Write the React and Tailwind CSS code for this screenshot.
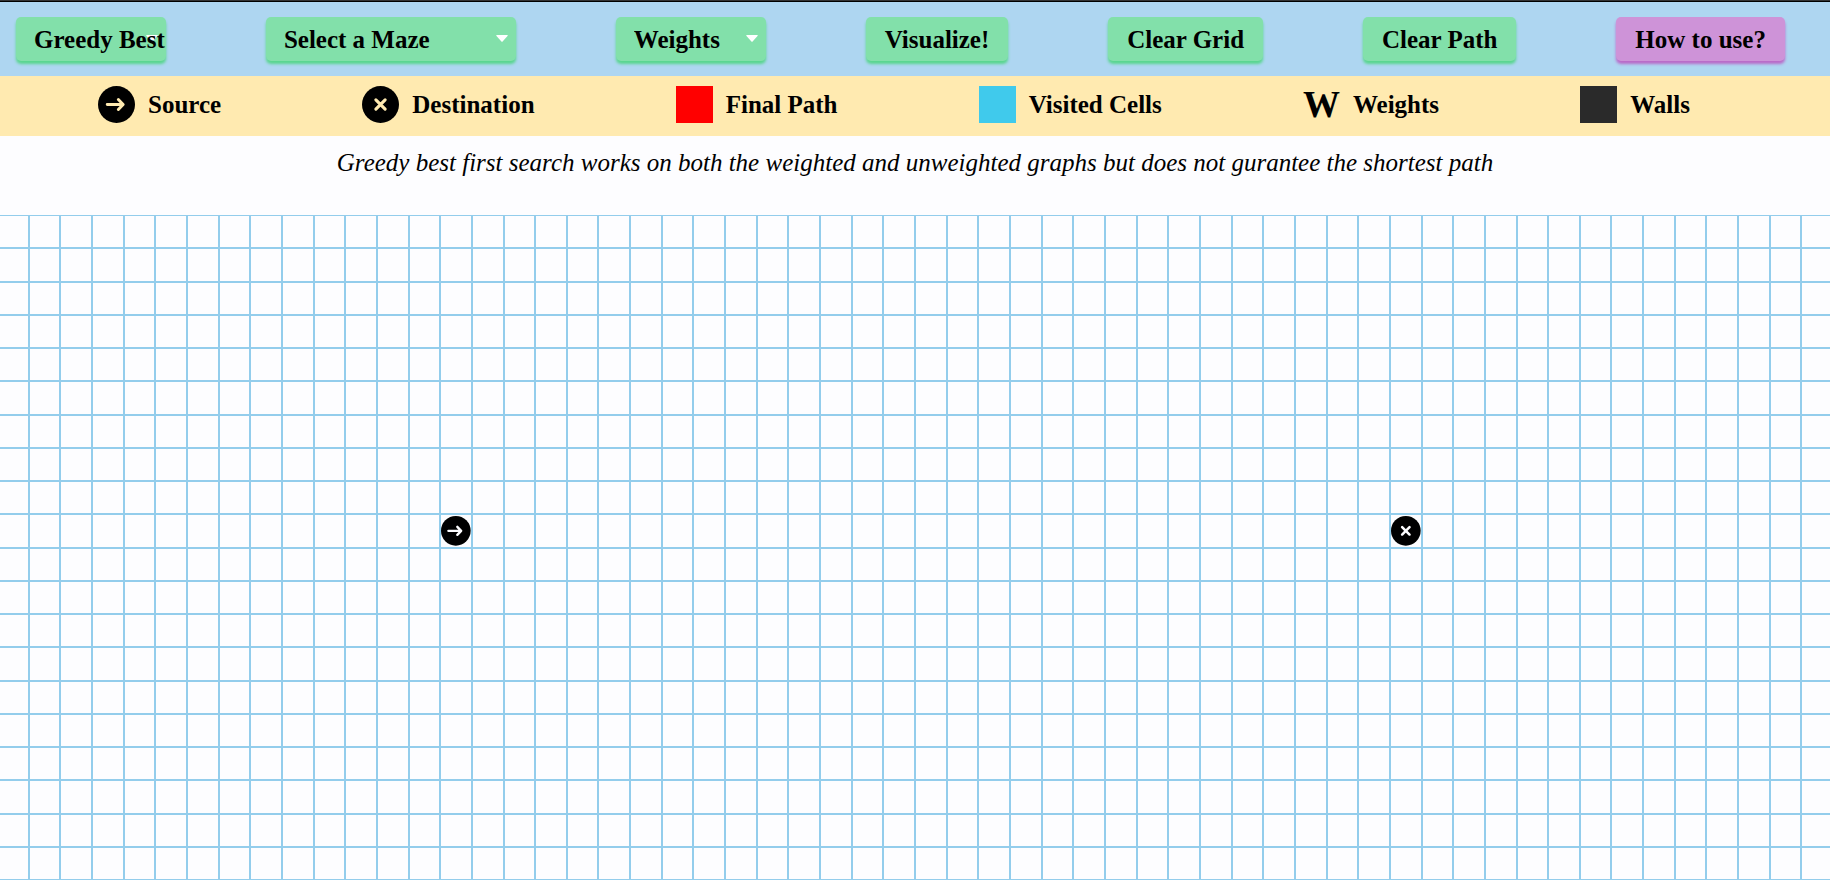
const ROWS = 20;
const COLS = 58;
const SOURCE = { row: 9, col: 14 };
const TARGET = { row: 9, col: 44 };

function ArrowIcon({ className }) {
  return (
    <svg viewBox="0 0 100 100" className={className} aria-hidden="true">
      <circle cx="50" cy="50" r="50" fill="black" stroke="none" />
      <path
        d="M25 50H67M55 36.500L68 50L55 63.500"
        fill="none"
        strokeWidth="8"
        strokeLinecap="round"
        strokeLinejoin="round"
      />
    </svg>
  );
}

function CrossIcon({ className }) {
  return (
    <svg viewBox="0 0 100 100" className={className} aria-hidden="true">
      <circle cx="50" cy="50" r="50" fill="black" stroke="none" />
      <path
        d="M37.500 37.500L62.500 62.500M62.500 37.500L37.500 62.500"
        fill="none"
        strokeWidth="8.500"
        strokeLinecap="round"
      />
    </svg>
  );
}

function Dropdown({ label, options, width }) {
  return (
    <div className={`relative h-11 shrink-0 rounded-[5px] bg-[#82e0aa] shadow-[0_3px_3px_#58d68d] ${width}`}>
      <svg
        viewBox="0 0 12 7"
        className="absolute right-2 top-[18px] h-[7px] w-3 fill-white"
        aria-hidden="true"
      >
        <path d="M0.500 0H11.500Q12 0.500 11.500 1L6.600 6.600Q6 7 5.400 6.600L0.500 1Q0 0.500 0.500 0Z" />
      </svg>
      <select
        aria-label={label}
        className="relative h-full w-full cursor-pointer appearance-none rounded-[5px] bg-transparent pl-[18px] text-[25px] leading-[29px] font-bold text-black outline-none"
      >
        {options.map((o) => (
          <option key={o}>{o}</option>
        ))}
      </select>
    </div>
  );
}

const buttonBase =
  "h-11 shrink-0 cursor-pointer rounded-[5px] px-[19px] text-[25px] leading-[29px] font-bold whitespace-nowrap text-black";

function ActionButton({ children }) {
  return (
    <button type="button" className={`${buttonBase} bg-[#82e0aa] shadow-[0_3px_3px_#58d68d]`}>
      {children}
    </button>
  );
}

function LegendItem({ label, children }) {
  return (
    <li className="flex items-center gap-[13px] whitespace-nowrap">
      {children}
      <span>{label}</span>
    </li>
  );
}

const cells = Array.from({ length: ROWS * COLS }, (_, i) => ({
  row: Math.floor(i / COLS),
  col: i % COLS,
}));

const isAt = (cell, node) => cell.row === node.row && cell.col === node.col;

export default function App() {
  return (
    <div className="flex min-h-screen flex-col overflow-hidden bg-[#fdfdff] font-['Liberation_Serif',serif] text-[25px] leading-[29px] text-black">
      <div className="h-0.5 border-b border-black bg-[#333333]" />

      <nav className="flex items-center justify-between bg-[#aed6f1] py-[15px] pr-[45px] pl-4">
        <Dropdown
          label="Algorithm"
          width="w-[150px]"
          options={["Greedy Best", "Dijkstra", "A* Search", "BFS", "DFS"]}
        />
        <Dropdown
          label="Maze"
          width="w-[250px]"
          options={["Select a Maze", "Random Maze", "Recursive Division"]}
        />
        <Dropdown label="Weights" width="w-[150px]" options={["Weights", "5", "10", "15"]} />
        <ActionButton>Visualize!</ActionButton>
        <ActionButton>Clear Grid</ActionButton>
        <ActionButton>Clear Path</ActionButton>
        <button type="button" className={`${buttonBase} bg-[#ce93d8] shadow-[0_3px_3px_#ba68c8]`}>
          How to use?
        </button>
      </nav>

      <ul className="flex items-center justify-between bg-[#ffeab0] pt-2.5 pr-[140px] pb-[13px] pl-[98px] font-bold">
        <LegendItem label="Source">
          <ArrowIcon className="size-[37px] stroke-[#ffeab0]" />
        </LegendItem>
        <LegendItem label="Destination">
          <CrossIcon className="size-[37px] stroke-[#ffeab0]" />
        </LegendItem>
        <LegendItem label="Final Path">
          <span className="size-[37px] bg-[#ff0000]" />
        </LegendItem>
        <LegendItem label="Visited Cells">
          <span className="size-[37px] bg-[#40caec]" />
        </LegendItem>
        <LegendItem label="Weights">
          <span className="text-[37px] leading-[37px]">W</span>
        </LegendItem>
        <LegendItem label="Walls">
          <span className="size-[37px] bg-[#2a2a2a]" />
        </LegendItem>
      </ul>

      <p className="pt-3 pb-[38px] text-center italic">
        Greedy best first search works on both the weighted and unweighted graphs but does not
        gurantee the shortest path
      </p>

      <main className="-ml-[3px] grid flex-1 grid-cols-[repeat(58,1.73vw)] grid-rows-[repeat(20,minmax(0,1fr))]">
        {cells.map((cell) => (
          <div
            key={`${cell.row}-${cell.col}`}
            className="flex items-center justify-center border border-[#93cdec]"
          >
            {isAt(cell, SOURCE) && <ArrowIcon className="w-full stroke-[#fdfdff]" />}
            {isAt(cell, TARGET) && <CrossIcon className="w-full stroke-[#fdfdff]" />}
          </div>
        ))}
      </main>
    </div>
  );
}
